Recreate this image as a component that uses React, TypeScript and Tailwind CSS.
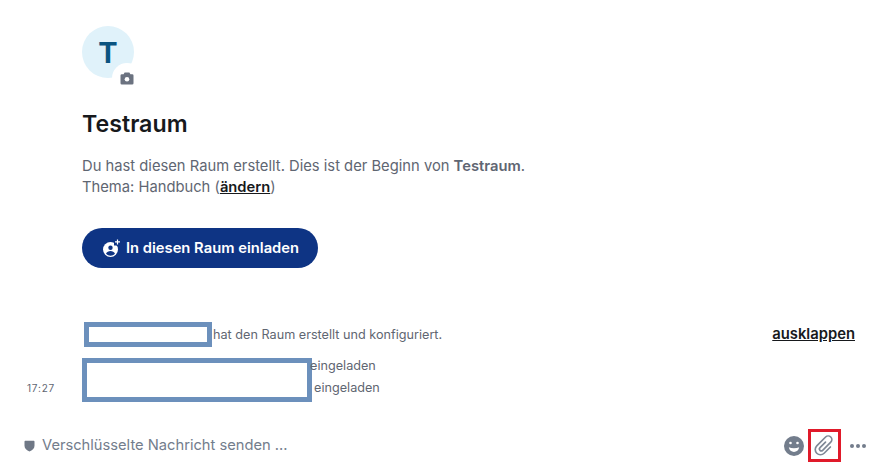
import React from "react";

function Camera() {
  return (
    <svg width="14" height="13" viewBox="0 0 14 13" fill="#6b7280">
      <path d="M4.6 0.5h4.8l1 1.7h1.8A1.3 1.3 0 0 1 13.5 3.5v7.7a1.3 1.3 0 0 1-1.3 1.3H1.8A1.3 1.3 0 0 1 .5 11.2V3.5a1.3 1.3 0 0 1 1.3-1.3h1.8z" />
      <circle cx="7" cy="7.2" r="2.3" fill="#fff" />
    </svg>
  );
}

function InviteIcon() {
  return (
    <svg width="18" height="18" viewBox="0 0 18 18">
      <circle cx="7.500" cy="10.500" r="7.500" fill="#fff" />
      <circle cx="7.500" cy="8.800" r="2.200" fill="#0e3484" />
      <path d="M3 14.700c.8-1.800 2.600-2.600 4.500-2.600s3.700.8 4.500 2.600a6 6 0 0 1-4.500 2 6 6 0 0 1-4.500-2z" fill="#0e3484" />
      <path d="M11 0h7v6.500h-7z" fill="#0e3484" />
      <path d="M14.500 .4v5M12 2.900h5" stroke="#fff" strokeWidth="1.200" />
    </svg>
  );
}

function Shield() {
  return (
    <svg width="11" height="12" viewBox="0 0 11 12" fill="#6f7886">
      <path d="M1.500 .8h8c.6 0 1 .4 1 1v4c0 2.900-2.300 4.700-5 5.700-2.700-1-5-2.800-5-5.700v-4c0-.6.4-1 1-1z" />
    </svg>
  );
}

function Smile() {
  return (
    <svg width="20" height="20" viewBox="0 0 20 20">
      <circle cx="10" cy="10" r="10" fill="#737d8c" />
      <circle cx="6.500" cy="7" r="1.300" fill="#fff" />
      <circle cx="13.500" cy="7" r="1.300" fill="#fff" />
      <path d="M4.800 11.300c1.500.7 3.300 1 5.200 1s3.700-.3 5.200-1c-.5 2.900-2.600 4.600-5.200 4.600s-4.700-1.700-5.200-4.600z" fill="#fff" />
    </svg>
  );
}

function Clip() {
  return (
    <svg width="25" height="25" viewBox="0 0 24 24" fill="none" stroke="#7f8896" strokeWidth="1.600" strokeLinecap="round" strokeLinejoin="round">
      <g transform="rotate(45 12 12)">
        <path d="M17 9V17.500a5 5 0 0 1-10 0V5.500a3.500 3.500 0 0 1 7 0V16.500a1.800 1.800 0 0 1-3.600 0V9" />
      </g>
    </svg>
  );
}

export default function App() {
  return (
    <div className="w-[885px] h-[472px] bg-white flex flex-col overflow-hidden text-[#17191c] font-['Inter',sans-serif]">
      <div className="pl-[82px] pt-[26px]">
        <div className="relative w-[52px] h-[52px] rounded-full bg-[#e0f2fa] flex items-center justify-center text-[29px] font-bold text-[#0b5480] leading-none">
          T
          <div className="absolute left-[30px] top-[37px] w-[30px] h-[30px] rounded-full bg-white flex items-center justify-center">
            <Camera />
          </div>
        </div>
        <h1 className="mt-[31px] text-[23.2px] leading-[30px] font-semibold">Testraum</h1>
        <p className="mt-[17px] text-[14.75px] leading-[21px] text-[#5f6672]">
          Du hast diesen Raum erstellt. Dies ist der Beginn von <b className="font-semibold">Testraum</b>.
          <br />
          Thema: Handbuch (<span className="font-semibold text-[#17191c] underline">ändern</span>)
        </p>
        <button className="mt-[30px] w-[236px] h-[40px] pl-[2px] rounded-full bg-[#0e3484] text-white text-[14.75px] font-semibold flex items-center justify-center gap-[5px]">
          <InviteIcon />
          In diesen Raum einladen
        </button>
      </div>

      <div className="mt-[54px] pl-[84px] pr-[30px] h-[25px] flex items-center text-[12.67px] text-[#5f6672]">
        <div className="w-[128px] h-[25px] border-[5px] border-[#6c90bc] bg-white" />
        <span className="ml-px">hat den Raum erstellt und konfiguriert.</span>
        <span className="ml-auto text-[14.8px] font-semibold text-[#17191c] underline">ausklappen</span>
      </div>

      <div className="mt-[11px] flex items-stretch text-[12.67px] text-[#5f6672]">
        <div className="w-[82px] pl-[27px] flex items-end pb-[7px] text-[10px] leading-[14px] tracking-[0.8px] text-[#5f6672]">17:27</div>
        <div className="w-[230px] h-[44px] border-[5px] border-[#6c90bc] bg-white" />
        <div className="flex flex-col -mt-[3px] leading-[22px]">
          <span className="-ml-[2px]">eingeladen</span>
          <span className="ml-[2px]">eingeladen</span>
        </div>
      </div>

      <div className="mt-[27px] pl-[24px] pr-[19px] flex items-center">
        <Shield />
        <span className="ml-[7px] text-[14.7px] text-[#737d8c]">Verschlüsselte Nachricht senden ...</span>
        <div className="ml-auto flex items-center">
          <Smile />
          <div className="ml-[4px] w-[33px] h-[33px] border-[3px] border-[#e01a2a] flex items-center justify-center">
            <Clip />
          </div>
          <div className="ml-[9px] flex gap-[2px]">
            <span className="w-[4px] h-[4px] rounded-full bg-[#737d8c]" />
            <span className="w-[4px] h-[4px] rounded-full bg-[#737d8c]" />
            <span className="w-[4px] h-[4px] rounded-full bg-[#737d8c]" />
          </div>
        </div>
      </div>
    </div>
  );
}
